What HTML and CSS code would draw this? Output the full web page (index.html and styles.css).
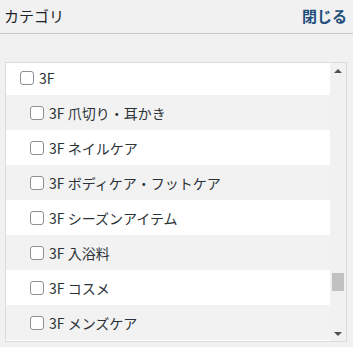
FILE: index.html
```html
<!DOCTYPE html>
<html lang="ja">
<head>
    <meta charset="UTF-8">
    <title>カテゴリ</title>
    <link rel="stylesheet" href="styles.css">
</head>
<body>
    <div class="head">
        <h2 class="head-title">カテゴリ</h2>
        <a href="#" class="head-close">閉じる</a>
    </div>

    <div class="box">
        <ul class="cat-list">
            <li class="cat"><label><input type="checkbox">3F</label></li>
            <li class="cat child"><label><input type="checkbox">3F 爪切り・耳かき</label></li>
            <li class="cat child"><label><input type="checkbox">3F ネイルケア</label></li>
            <li class="cat child"><label><input type="checkbox">3F ボディケア・フットケア</label></li>
            <li class="cat child"><label><input type="checkbox">3F シーズンアイテム</label></li>
            <li class="cat child"><label><input type="checkbox">3F 入浴料</label></li>
            <li class="cat child"><label><input type="checkbox">3F コスメ</label></li>
            <li class="cat child"><label><input type="checkbox">3F メンズケア</label></li>
        </ul>
        <div class="sbar">
            <div class="sbar-btn"><span class="arr up"></span></div>
            <div class="sbar-track">
                <div class="sbar-before"></div>
                <div class="sbar-thumb"></div>
                <div class="sbar-after"></div>
            </div>
            <div class="sbar-btn"><span class="arr down"></span></div>
        </div>
    </div>
</body>
</html>
```

FILE: styles.css
```css
* {padding: 0; margin: 0; box-sizing: border-box;}
body {background: #f1f1f1; font-family: "Noto Sans CJK JP", "Noto Sans", sans-serif; color: #2c3338;}

.head {height: 34px; display: flex; justify-content: space-between; align-items: center;
    padding: 0 6px 2px 4px; border-bottom: 1px solid #c9c9c9;}
.head-title {font-size: 15px; font-weight: 400; color: #1d2327;}
.head-close {font-size: 15px; font-weight: 700; color: #1f4e7d; text-decoration: none;}

.box {margin: 28px 6px 0 5px; height: 280px; border: 1px solid #dcdcde; background: #fff;
    display: flex; overflow: hidden;}

.cat-list {flex: 1; list-style: none; margin-top: -3px;}
.cat {height: 35px; display: flex; align-items: center; padding-left: 14px; font-size: 14px;}
.cat:nth-child(even) {background: #f2f2f2;}
.cat.child {padding-left: 24px;}
.cat label {display: flex; align-items: center; gap: 5px; white-space: pre;}
.cat input {appearance: none; width: 14px; height: 14px; border: 1px solid #8c8f94;
    border-radius: 3px; background: #fff;}

.sbar {width: 16px; background: #f1f1f1; display: flex; flex-direction: column;}
.sbar-btn {height: 15px; display: flex; align-items: center; justify-content: center;}
.arr {width: 0; height: 0; border-left: 4px solid transparent; border-right: 4px solid transparent;}
.arr.up {border-bottom: 4px solid #505050;}
.arr.down {border-top: 4px solid #505050;}
.sbar-track {flex: 1; display: flex; flex-direction: column;}
.sbar-before {height: 195px;}
.sbar-thumb {height: 18px; margin: 0 2px; background: #c1c1c1;}
.sbar-after {flex: 1;}
```
